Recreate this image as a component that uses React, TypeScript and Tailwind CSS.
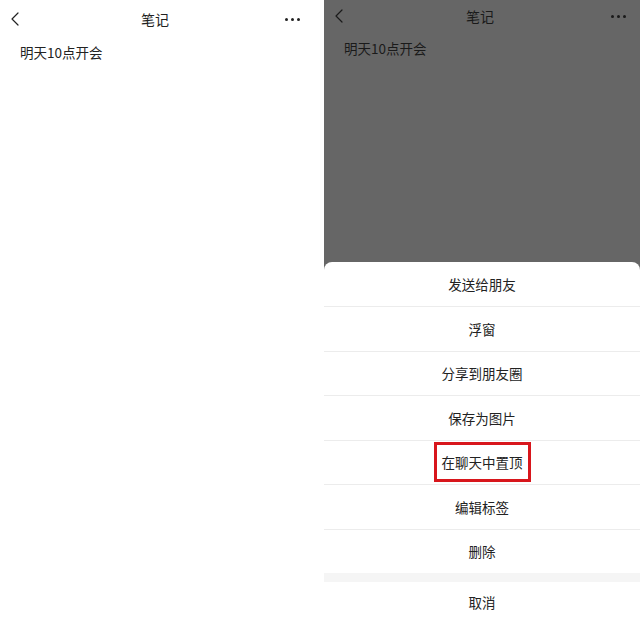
import { ChevronLeft } from "lucide-react"

const font = { fontFamily: '"Noto Sans CJK SC", "Noto Sans", sans-serif' }

const menuItems = ["发送给朋友", "浮窗", "分享到朋友圈", "保存为图片", "在聊天中置顶", "编辑标签", "删除"]

const Dots = ({ className }: { className: string }) => (
  <div className={`flex items-center justify-center gap-[3px] ${className}`}>
    <span className="w-[3px] h-[3px] rounded-full bg-current" />
    <span className="w-[3px] h-[3px] rounded-full bg-current" />
    <span className="w-[3px] h-[3px] rounded-full bg-current" />
  </div>
)

const Header = ({ dim }: { dim?: boolean }) => (
  <div className={`h-[38px] flex items-center justify-between pl-[3px] ${dim ? "pr-[13px] text-[#1a1a1a]" : "pr-[23px] text-[#222]"}`}>
    <ChevronLeft className="w-[24px] h-[24px]" strokeWidth={1.2} />
    <span className="text-[14px]">笔记</span>
    <Dots className="w-[18px]" />
  </div>
)

export default function App() {
  return (
    <div className="w-[640px] h-[622px] flex bg-white overflow-hidden" style={font}>
      {/* left: the note */}
      <section className="w-[324px] h-full bg-white">
        <Header />
        <p className="px-[20px] pt-[4px] text-[13.5px] text-[#222]">明天10点开会</p>
      </section>

      {/* right: note with action sheet */}
      <section className="flex-1 h-full flex flex-col bg-[#666666]">
        <div className="flex-1 -mt-[3px]">
          <Header dim />
          <p className="px-[20px] pt-[3px] text-[13.5px] text-[#1a1a1a]">明天10点开会</p>
        </div>

        <div className="bg-white rounded-t-[8px] text-[13.5px] text-[#222]">
          {menuItems.map((item, i) => (
            <div
              key={item}
              className={`h-[44.5px] flex items-center justify-center ${i > 0 ? "border-t border-[#ececec]" : ""}`}
            >
              {item === "在聊天中置顶" ? (
                <span className="border-[3px] border-[#d8161c] px-[5px] py-[7px] leading-[20px]">{item}</span>
              ) : (
                item
              )}
            </div>
          ))}
          <div className="h-[9px] bg-[#f5f5f5]" />
          <div className="h-[40px] flex items-center justify-center">取消</div>
        </div>
      </section>
    </div>
  )
}
